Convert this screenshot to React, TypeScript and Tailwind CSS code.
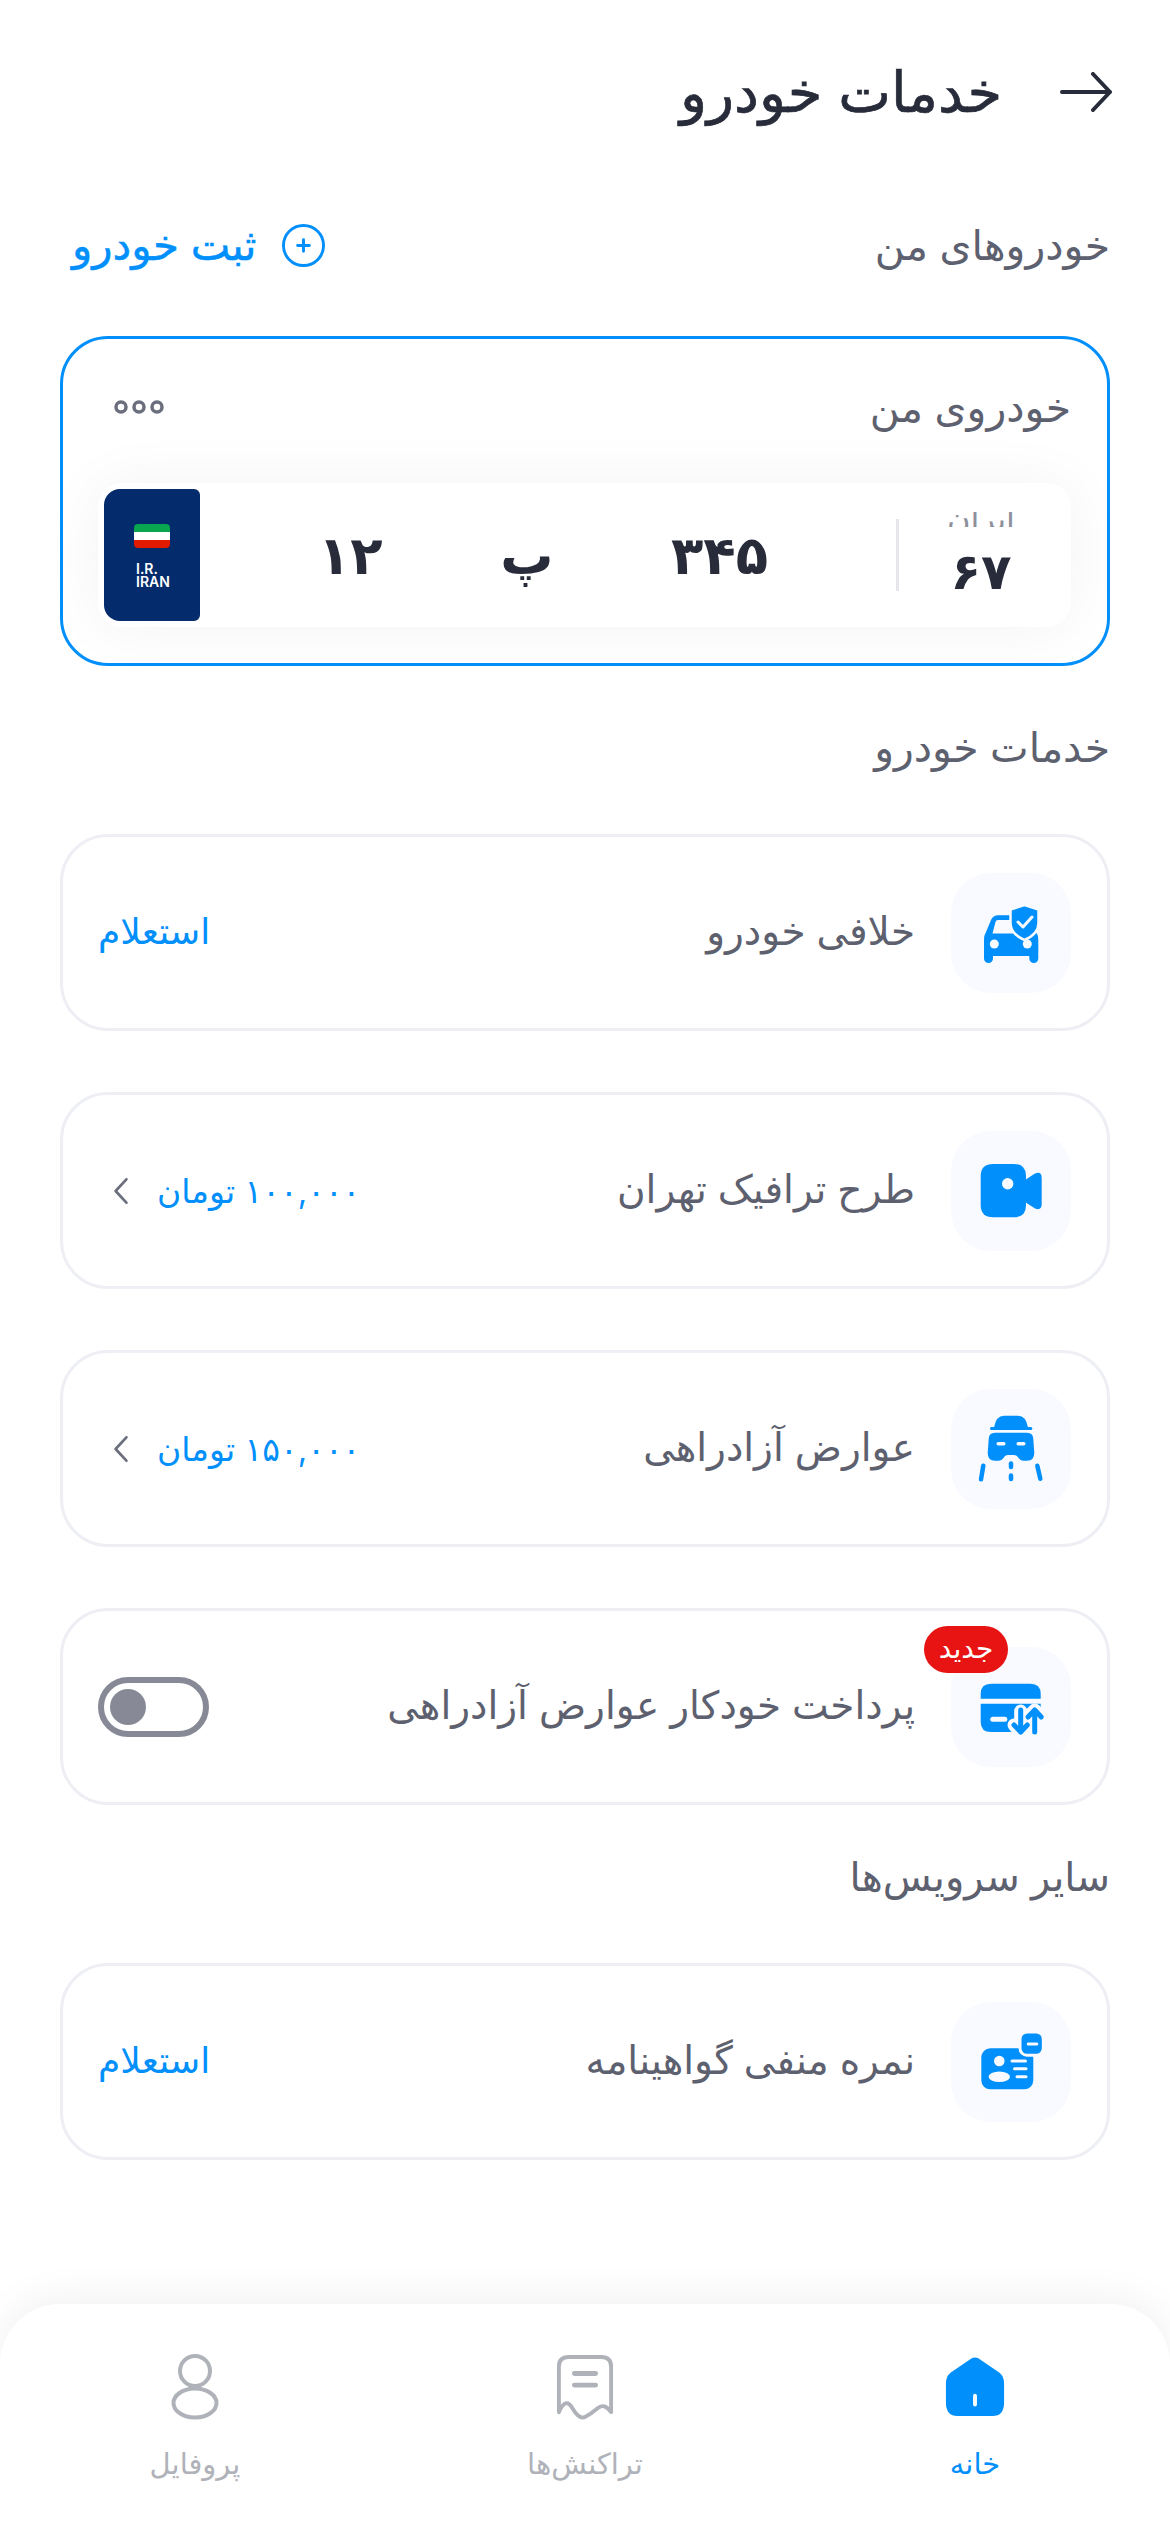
import type { ReactNode } from 'react'

const font = "font-['Inter','DejaVu_Sans',sans-serif]"
const halo = '#f8faff'

function CarShieldIcon() {
  return (
    <svg viewBox="0 0 80 80" className="w-20 h-20">
      <path fill="#008ffb" d="M13 47Q13 42 15 39L20 27Q22 22.3 27 22.3H58Q62 22.3 64 27L65 39Q67.3 42 67.3 47V65.500a4.500 4.500 0 0 1-9 0V63H22V65.500a4.500 4.500 0 0 1-9 0Z" />
      <path fill={halo} d="M27 27H60V40.500H21.500L24.500 29Q25 27 27 27Z" />
      <circle cx="23.300" cy="51" r="4.500" fill={halo} />
      <circle cx="56.300" cy="51" r="4.500" fill={halo} />
      <path fill="#008ffb" stroke={halo} strokeWidth="2.500" d="M53.500 12L67.500 16.500V30Q67.500 41 53.500 47Q39.500 41 39.500 30V16.500Z" />
      <path fill="none" stroke={halo} strokeWidth="3" strokeLinecap="round" strokeLinejoin="round" d="M47 29L52 34L61 24" />
    </svg>
  )
}

function VideoIcon() {
  return (
    <svg viewBox="0 0 80 80" className="w-20 h-20">
      <path fill="#008ffb" d="M22 13H43Q55 13 55 25V54Q55 66.300 43 66.300H22Q9.700 66.300 9.700 54V25Q9.700 13 22 13Z" />
      <path fill="#008ffb" d="M54 29L64 22.500Q70.700 20 70.700 27V53Q70.700 60 64 57.500L54 51Z" />
      <circle cx="36.700" cy="32.700" r="5.700" fill={halo} />
    </svg>
  )
}

function HatCarIcon() {
  return (
    <svg viewBox="0 0 80 80" className="w-20 h-20">
      <path fill="#008ffb" d="M23 18.500Q25 6.700 33 6.700H47Q55 6.700 57 18.500Z" />
      <rect x="19" y="18" width="42.300" height="3" rx="1.500" fill="#008ffb" />
      <path fill="#008ffb" d="M24 23.700H56Q62 23.700 62.300 30L63.300 44Q63.300 51.700 56 51.700H52Q49.500 51.700 47.500 49Q46 46 43 46H37Q34 46 32.500 49Q30.500 51.700 28 51.700H24Q16.700 51.700 16.700 44L17.700 30Q18 23.700 24 23.700Z" />
      <rect x="25.500" y="33" width="9" height="3.500" rx="1.700" fill={halo} />
      <rect x="45.500" y="33" width="9" height="3.500" rx="1.700" fill={halo} />
      <g stroke="#008ffb" strokeWidth="4.500" strokeLinecap="round" fill="none">
        <path d="M40 54.500V58" />
        <path d="M40 66.500V70" />
        <path d="M12.300 56.700L10 70.300" />
        <path d="M66.300 56.700L69.300 69.700" />
      </g>
    </svg>
  )
}

function CardArrowsIcon() {
  return (
    <svg viewBox="0 0 80 80" className="w-20 h-20">
      <path fill="#008ffb" d="M9.700 31.700V27Q9.700 16.700 20 16.700H59.500Q69.700 16.700 69.700 27V31.700Z" />
      <path fill="#008ffb" d="M9.700 36.700H69.700V58Q69.700 65 59.500 65H20Q9.700 65 9.700 55Z" />
      <path fill="none" stroke={halo} strokeWidth="13" strokeLinejoin="round" strokeLinecap="round" d="M49.700 44V64M43 58L49.700 65L56.300 58M63.700 64V44M57 50L63.700 43L70.300 50" />
      <g fill="none" stroke="#008ffb" strokeWidth="5" strokeLinecap="round" strokeLinejoin="round">
        <path d="M49.700 43V65M43 58L49.700 65L56.300 58" />
        <path d="M63.700 65V43M57 50L63.700 43L70.300 50" />
      </g>
      <rect x="19.300" y="49.800" width="17" height="5" rx="2.500" fill={halo} />
    </svg>
  )
}

function LicenseIcon() {
  return (
    <svg viewBox="0 0 80 80" className="w-20 h-20">
      <rect x="10.300" y="26.300" width="52" height="41" rx="9" fill="#008ffb" />
      <rect x="49" y="10" width="23.300" height="23.300" rx="7" fill="#008ffb" stroke={halo} strokeWidth="3" />
      <rect x="55.700" y="20.500" width="11.600" height="3" rx="1.500" fill={halo} />
      <circle cx="28.300" cy="39" r="5.300" fill={halo} />
      <ellipse cx="28.300" cy="54.700" rx="10.700" ry="5.300" fill={halo} />
      <g stroke={halo} strokeWidth="3" strokeLinecap="round">
        <path d="M41 39H54.500" />
        <path d="M43.500 46.700H55" />
        <path d="M46 54.700H55" />
      </g>
    </svg>
  )
}

function Chevron() {
  return (
    <svg viewBox="0 0 20 32" className="w-[18px] h-[30px]">
      <path d="M16 3L4 16L16 29" fill="none" stroke="#6b6e7c" strokeWidth="3" strokeLinecap="round" strokeLinejoin="round" />
    </svg>
  )
}

function Price({ text }: { text: string }) {
  return (
    <div className="flex items-center gap-[27px] pl-[14px]">
      <span className="text-[33px] leading-[40px] text-[#008ffb]">{text}</span>
      <Chevron />
    </div>
  )
}

function Inquiry() {
  return <span className="block pb-[4px] text-[36px] leading-[40px] text-[#008ffb]">استعلام</span>
}

function Toggle() {
  return (
    <div className="w-[111px] h-[60px] rounded-full border-[6px] border-[#878a96] flex items-center justify-end px-[6px]">
      <div className="w-9 h-9 rounded-full bg-[#878a96]" />
    </div>
  )
}

function ServiceRow({ icon, label, badge, children }: { icon: ReactNode; label: string; badge?: boolean; children: ReactNode }) {
  return (
    <div className="h-[197px] rounded-[48px] border-[3px] border-[#eeeff5] bg-white flex items-center pr-[36px] pl-[35px]">
      <div className="relative w-[120px] h-[120px] rounded-[40px] bg-[#f8faff] flex items-center justify-center shrink-0">
        {icon}
        {badge && (
          <span className="absolute top-[-21px] left-[-27px] w-[84px] h-[47px] rounded-full bg-[#e81414] text-white text-[28px] leading-[44px] text-center">
            جدید
          </span>
        )}
      </div>
      <span className="mr-[36px] pb-[3px] text-[39px] leading-[48px] text-[#5d606e]">{label}</span>
      <div className="mr-auto">{children}</div>
    </div>
  )
}

function NavItem({ icon, label, active }: { icon: ReactNode; label: string; active?: boolean }) {
  return (
    <div className="flex flex-col items-center">
      <div className="h-[66px] flex items-center justify-center">{icon}</div>
      <span className={`mt-[27px] text-[29px] leading-[34px] ${active ? 'text-[#008ffb]' : 'text-[#b0b2b9]'}`}>{label}</span>
    </div>
  )
}

export default function App() {
  return (
    <div dir="rtl" className={`${font} w-[1170px] min-h-[2531px] bg-white flex flex-col`}>
      {/* header */}
      <div className="pt-[62px] px-[58px] h-[122px] flex items-center gap-[58px]">
        <svg viewBox="0 0 52 40" className="w-[52px] h-[40px]">
          <path d="M2 20H50M33 2L50 20L33 38" fill="none" stroke="#272b3a" strokeWidth="4" strokeLinecap="round" strokeLinejoin="round" />
        </svg>
        <h1 className="text-[56px] leading-[60px] [-webkit-text-stroke:0.7px_#272b3a] text-[#272b3a]">خدمات خودرو</h1>
      </div>

      <div className="px-[60px]">
        {/* my cars */}
        <div className="mt-[93px] h-[60px] flex items-center justify-between">
          <h2 className="text-[41px] leading-[60px] text-[#5d606e]">خودروهای من</h2>
          <div className="flex items-center gap-[26px] pl-[12px]">
            <svg viewBox="0 0 44 44" className="w-[43px] h-[43px]">
              <circle cx="22" cy="22" r="20.500" fill="none" stroke="#008ffb" strokeWidth="3" />
              <path d="M16 22H28M22 16V28" stroke="#008ffb" strokeWidth="3" strokeLinecap="round" />
            </svg>
            <span className="text-[42px] leading-[60px] [-webkit-text-stroke:0.5px_#008ffb] text-[#008ffb]">ثبت خودرو</span>
          </div>
        </div>

        {/* car card */}
        <div className="mt-[61px] h-[330px] rounded-[48px] border-[3px] border-[#008ffb] bg-white pt-[38px] pb-[36px] pr-[36px] pl-[35px] flex flex-col justify-between">
          <div className="flex items-center justify-between pl-[16px]">
            <span className="text-[41px] leading-[60px] text-[#5d606e]">خودروی من</span>
            <svg viewBox="0 0 50 14" className="w-[50px] h-[14px]">
              <g fill="none" stroke="#6b6e7c" strokeWidth="3.500">
                <circle cx="7" cy="7" r="5" />
                <circle cx="25" cy="7" r="5" />
                <circle cx="43" cy="7" r="5" />
              </g>
            </svg>
          </div>
          <div className="h-[144px] rounded-[24px] bg-white shadow-[0_0_60px_rgba(0,0,0,0.05)] flex items-center pl-[6px]">
            <div className="w-[172px] shrink-0 flex flex-col items-center h-full pt-[29px] pr-[8px]">
              <div className="h-[15px] overflow-hidden flex items-end">
                <span className="-mb-[12px] text-[32px] leading-[40px] text-[#8d909b]">ایران</span>
              </div>
              <span className="mt-[14px] text-[50px] leading-[60px] font-bold text-[#272b3a]">۶۷</span>
            </div>
            <div className="w-[3px] h-[72px] bg-[#e6e7ec] shrink-0" />
            <div className="flex-1 flex items-center justify-between pr-[128px] pl-[118px] text-[#272b3a] text-[53px] leading-[60px] font-bold">
              <span>۳۴۵</span>
              <span>پ</span>
              <span>۱۲</span>
            </div>
            <div className="w-[96px] h-[132px] shrink-0 bg-[#042b6b] rounded-l-[16px] rounded-r-[6px] flex flex-col items-center pt-[35px]">
              <div className="w-9 h-6 rounded-[4px] overflow-hidden flex flex-col">
                <div className="h-2 bg-[#0aa64f]" />
                <div className="h-2 bg-white" />
                <div className="h-2 bg-[#e21b00]" />
              </div>
              <div dir="ltr" className="mt-[14px] w-[32px] font-['Inter',sans-serif] text-white text-[14px] leading-[13px] font-semibold">
                <div>I.R.</div>
                <div>IRAN</div>
              </div>
            </div>
          </div>
        </div>

        {/* car services */}
        <h2 className="mt-[51px] h-[60px] text-[41px] leading-[60px] text-[#5d606e]">خدمات خودرو</h2>
        <div className="mt-[57px] flex flex-col gap-[61px]">
          <ServiceRow icon={<CarShieldIcon />} label="خلافی خودرو">
            <Inquiry />
          </ServiceRow>
          <ServiceRow icon={<VideoIcon />} label="طرح ترافیک تهران">
            <Price text="۱۰۰,۰۰۰ تومان" />
          </ServiceRow>
          <ServiceRow icon={<HatCarIcon />} label="عوارض آزادراهی">
            <Price text="۱۵۰,۰۰۰ تومان" />
          </ServiceRow>
          <ServiceRow icon={<CardArrowsIcon />} label="پرداخت خودکار عوارض آزادراهی" badge>
            <Toggle />
          </ServiceRow>
        </div>

        {/* other */}
        <h2 className="mt-[42px] h-[60px] text-[40px] leading-[60px] text-[#5d606e]">سایر سرویس‌ها</h2>
        <div className="mt-[56px]">
          <ServiceRow icon={<LicenseIcon />} label="نمره منفی گواهینامه">
            <Inquiry />
          </ServiceRow>
        </div>
      </div>

      {/* bottom nav */}
      <div className="mt-auto h-[227px] rounded-t-[60px] bg-white shadow-[0_-6px_40px_rgba(0,0,0,0.06)] grid grid-cols-3 pt-[50px]">
        <NavItem
          active
          label="خانه"
          icon={
            <svg viewBox="0 0 64 64" className="w-[62px] h-[62px]">
              <path fill="#008ffb" d="M32 1.500Q35 1.500 38 4L57 17Q62 21 62 28V48Q62 62 50 62H14Q2 62 2 48V28Q2 21 7 17L26 4Q29 1.500 32 1.500Z" />
              <rect x="30" y="39" width="4" height="13" rx="2" fill="#fff" />
            </svg>
          }
        />
        <NavItem
          label="تراکنش‌ها"
          icon={
            <svg viewBox="0 0 60 68" className="w-[58px] h-[66px]">
              <path fill="none" stroke="#b0b2b9" strokeWidth="4" strokeLinejoin="round" strokeLinecap="round" d="M3 60V13Q3 3 13 3H47Q57 3 57 13V60Q50 50 43 56T30 65T17 56T3 60Z" />
              <path stroke="#b0b2b9" strokeWidth="5" strokeLinecap="round" d="M19 20H41M19 32H41" />
            </svg>
          }
        />
        <NavItem
          label="پروفایل"
          icon={
            <svg viewBox="0 0 48 66" className="w-[48px] h-[66px]">
              <circle cx="24" cy="17" r="15" fill="none" stroke="#b0b2b9" strokeWidth="4" />
              <ellipse cx="24" cy="49" rx="21.500" ry="14.500" fill="none" stroke="#b0b2b9" strokeWidth="4" />
            </svg>
          }
        />
      </div>
    </div>
  )
}
